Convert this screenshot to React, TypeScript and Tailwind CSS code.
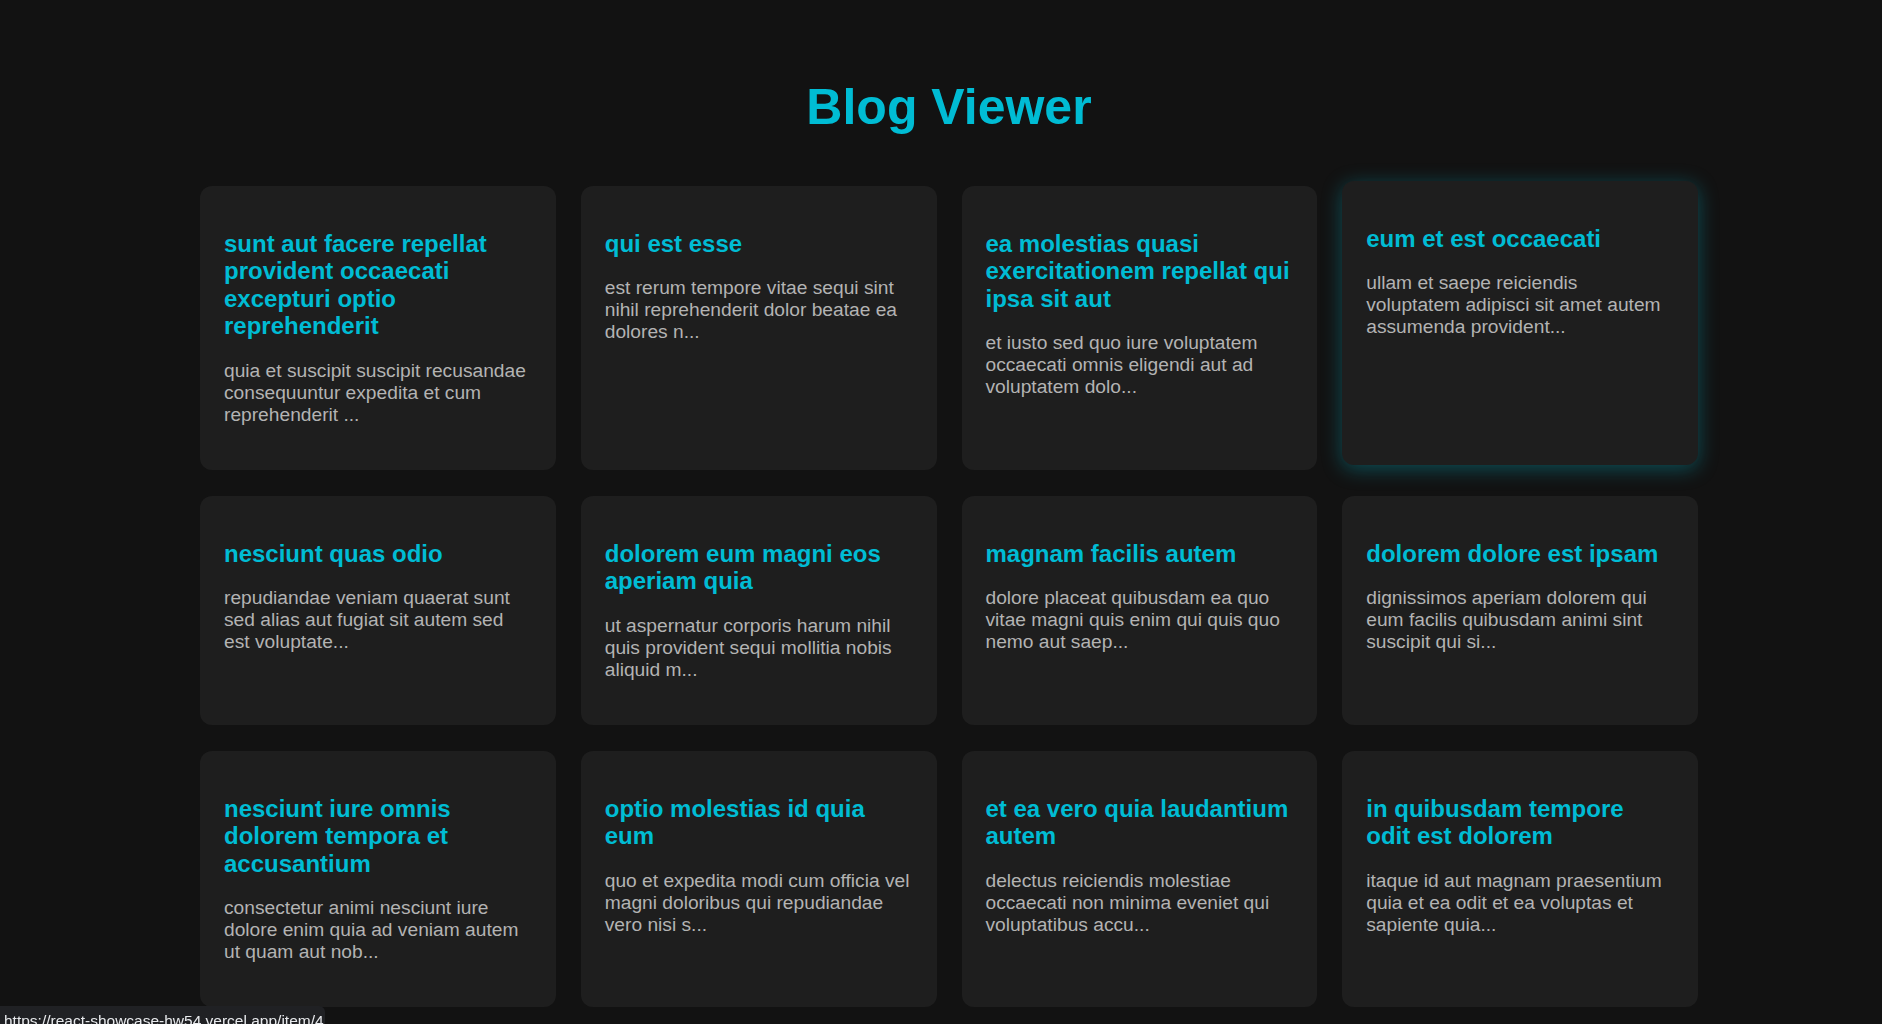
import React from 'react';

type Post = { id: number; title: string; body: string };

const posts: Post[] = [
  { id: 1, title: 'sunt aut facere repellat provident occaecati excepturi optio reprehenderit', body: 'quia et suscipit suscipit recusandae consequuntur expedita et cum reprehenderit ...' },
  { id: 2, title: 'qui est esse', body: 'est rerum tempore vitae sequi sint nihil reprehenderit dolor beatae ea dolores n...' },
  { id: 3, title: 'ea molestias quasi exercitationem repellat qui ipsa sit aut', body: 'et iusto sed quo iure voluptatem occaecati omnis eligendi aut ad voluptatem dolo...' },
  { id: 4, title: 'eum et est occaecati', body: 'ullam et saepe reiciendis voluptatem adipisci sit amet autem assumenda provident...' },
  { id: 5, title: 'nesciunt quas odio', body: 'repudiandae veniam quaerat sunt sed alias aut fugiat sit autem sed est voluptate...' },
  { id: 6, title: 'dolorem eum magni eos aperiam quia', body: 'ut aspernatur corporis harum nihil quis provident sequi mollitia nobis aliquid m...' },
  { id: 7, title: 'magnam facilis autem', body: 'dolore placeat quibusdam ea quo vitae magni quis enim qui quis quo nemo aut saep...' },
  { id: 8, title: 'dolorem dolore est ipsam', body: 'dignissimos aperiam dolorem qui eum facilis quibusdam animi sint suscipit qui si...' },
  { id: 9, title: 'nesciunt iure omnis dolorem tempora et accusantium', body: 'consectetur animi nesciunt iure dolore enim quia ad veniam autem ut quam aut nob...' },
  { id: 10, title: 'optio molestias id quia eum', body: 'quo et expedita modi cum officia vel magni doloribus qui repudiandae vero nisi s...' },
  { id: 11, title: 'et ea vero quia laudantium autem', body: 'delectus reiciendis molestiae occaecati non minima eveniet qui voluptatibus accu...' },
  { id: 12, title: 'in quibusdam tempore odit est dolorem', body: 'itaque id aut magnam praesentium quia et ea odit et ea voluptas et sapiente quia...' },
];

const PostCard = ({ post, active }: { post: Post; active?: boolean }) => (
  <a
    href={`#/item/${post.id}`}
    className={
      active
        ? 'block rounded-xl bg-[#1e1e1e] p-6 -translate-y-[5px] shadow-[0_4px_20px_rgba(0,188,212,0.35)] transition-all'
        : 'block rounded-xl bg-[#1e1e1e] p-6 transition-all hover:-translate-y-[5px] hover:shadow-[0_4px_20px_rgba(0,188,212,0.35)]'
    }
  >
    <h2 className="my-5 text-[24px] font-bold leading-[1.15] text-[#00bcd4]">{post.title}</h2>
    <p className="my-[19.5px] text-[19.2px] leading-[1.15] text-[#b3b3b3]">{post.body}</p>
  </a>
);

export default function App() {
  return (
    <div className="min-h-screen bg-[#121212] pl-4 font-['Liberation_Sans',Arial,sans-serif]">
      <div className="mx-auto w-[1498px] pt-[79px] pb-10">
        <h1 className="mb-[49px] text-center text-[50px] font-bold leading-[1.15] text-[#00bcd4]">Blog Viewer</h1>
        <div className="grid grid-cols-4 gap-x-[25px] gap-y-[26px]">
          {posts.map((p) => (
            <PostCard key={p.id} post={p} active={p.id === 4} />
          ))}
        </div>
      </div>
      <div className="fixed bottom-0 left-0 h-[18px] w-[325px] overflow-hidden whitespace-nowrap rounded-tr-md bg-[#202124] pl-1 font-['Liberation_Sans',sans-serif] text-[15.5px] leading-[30px] text-[#e8eaed]">
        https://react-showcase-hw54.vercel.app/item/4
      </div>
    </div>
  );
}
